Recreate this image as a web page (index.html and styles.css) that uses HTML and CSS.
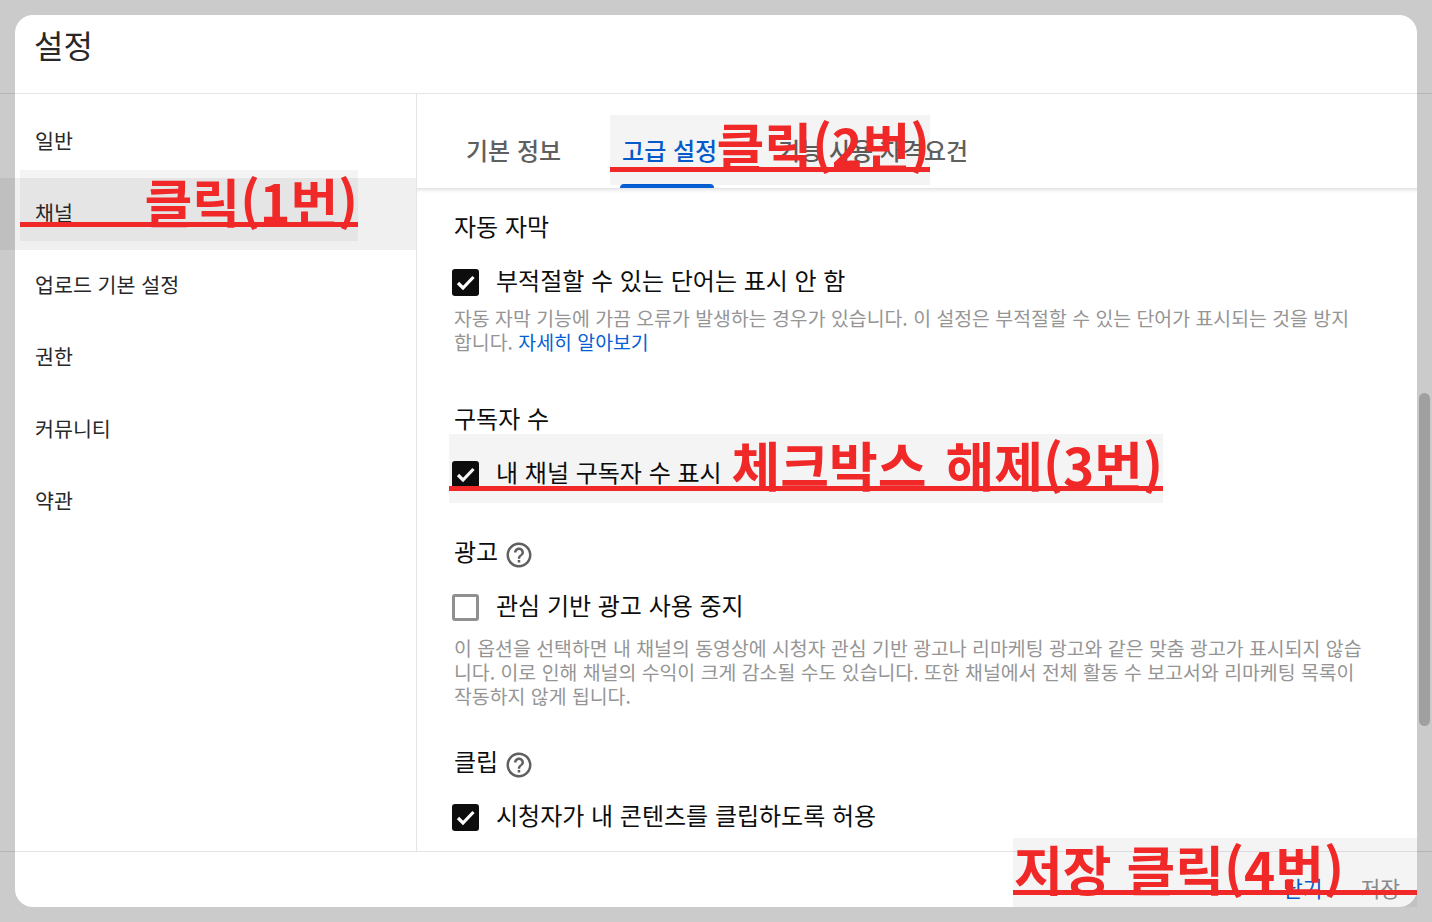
FILE: index.html
```html
<!DOCTYPE html>
<html lang="ko">
<head>
  <meta charset="UTF-8">
  <title>설정</title>
  <link rel="stylesheet" href="styles.css">
</head>
<body>

  <div class="dialog">
    <div class="dialog-header">설정</div>

    <div class="dialog-body">
      <!-- Left menu -->
      <div class="sidebar">
        <div class="side-item">일반</div>
        <div class="side-item side-item-active">채널</div>
        <div class="side-item">업로드 기본 설정</div>
        <div class="side-item">권한</div>
        <div class="side-item">커뮤니티</div>
        <div class="side-item">약관</div>
      </div>

      <div class="main">
        <div class="tabs">
          <div class="tab">기본 정보</div>
          <div class="tab tab-active">고급 설정</div>
          <div class="tab">기능 사용 자격요건</div>
        </div>

        <div class="content">
          <div class="section">
            <div class="section-title">자동 자막</div>
            <div class="check-row">
              <span class="checkbox checked">
                <svg viewBox="0 0 27 27"><path d="M6 14l5 5L21.5 8"/></svg>
              </span>
              부적절할 수 있는 단어는 표시 안 함
            </div>
            <div class="desc desc-tight">자동 자막 기능에 가끔 오류가 발생하는 경우가 있습니다. 이 설정은 부적절할 수 있는 단어가 표시되는 것을 방지합니다. <a href="#">자세히 알아보기</a></div>
          </div>

          <div class="section section-tall">
            <div class="section-title">구독자 수</div>
            <div class="check-row">
              <span class="checkbox checked">
                <svg viewBox="0 0 27 27"><path d="M6 14l5 5L21.5 8"/></svg>
              </span>
              내 채널 구독자 수 표시
            </div>
          </div>

          <div class="section section-short">
            <div class="section-title">
              광고
              <svg class="help" viewBox="0 0 24 24"><path d="M11 18h2v-2h-2v2zm1-16C6.48 2 2 6.48 2 12s4.48 10 10 10 10-4.48 10-10S17.52 2 12 2zm0 18c-4.41 0-8-3.59-8-8s3.59-8 8-8 8 3.59 8 8-3.59 8-8 8zm0-14c-2.21 0-4 1.79-4 4h2c0-1.1.9-2 2-2s2 .9 2 2c0 2-3 1.75-3 5h2c0-2.25 3-2.5 3-5 0-2.21-1.79-4-4-4z"/></svg>
            </div>
            <div class="check-row">
              <span class="checkbox"></span>
              관심 기반 광고 사용 중지
            </div>
            <div class="desc">이 옵션을 선택하면 내 채널의 동영상에 시청자 관심 기반 광고나 리마케팅 광고와 같은 맞춤 광고가 표시되지 않습니다. 이로 인해 채널의 수익이 크게 감소될 수도 있습니다. 또한 채널에서 전체 활동 수 보고서와 리마케팅 목록이 작동하지 않게 됩니다.</div>
          </div>

          <div class="section">
            <div class="section-title">
              클립
              <svg class="help" viewBox="0 0 24 24"><path d="M11 18h2v-2h-2v2zm1-16C6.48 2 2 6.48 2 12s4.48 10 10 10 10-4.48 10-10S17.52 2 12 2zm0 18c-4.41 0-8-3.59-8-8s3.59-8 8-8 8 3.59 8 8-3.59 8-8 8zm0-14c-2.21 0-4 1.79-4 4h2c0-1.1.9-2 2-2s2 .9 2 2c0 2-3 1.75-3 5h2c0-2.25 3-2.5 3-5 0-2.21-1.79-4-4-4z"/></svg>
            </div>
            <div class="check-row">
              <span class="checkbox checked">
                <svg viewBox="0 0 27 27"><path d="M6 14l5 5L21.5 8"/></svg>
              </span>
              시청자가 내 콘텐츠를 클립하도록 허용
            </div>
          </div>
        </div>
      </div>
    </div>

    <div class="dialog-footer">
      <span class="btn-close">닫기</span>
      <span class="btn-save">저장</span>
    </div>
  </div>

  <div class="scrollbar"></div>

  <!-- Red notes drawn over the screenshot -->
  <div class="mark mark-1"><div class="mark-label">클릭(1번)</div></div>
  <div class="mark mark-2"><div class="mark-label">클릭(2번)</div></div>
  <div class="mark mark-3"><div class="mark-label">체크박스 해제(3번)</div></div>
  <div class="mark mark-4"><div class="mark-label">저장 클릭(4번)</div></div>

</body>
</html>
```

FILE: styles.css
```css
html, body { height: 100%; }
body { margin: 0; background: #cbcbcb; font-family: "Noto Sans CJK KR", "Noto Sans", sans-serif; color: #0d0d0d; overflow: hidden; }

.dialog { position: relative; display: flex; flex-direction: column; height: 892px; margin: 15px; background: #fff; border-radius: 18px; }

.dialog-header { position: relative; height: 78px; padding: 6px 19px 0; box-sizing: border-box; font-size: 32px; line-height: 46px; color: #282828; }
.dialog-header::after { content: ""; position: absolute; left: -15px; right: -15px; bottom: -1px; height: 1px; background: rgba(0,0,0,.1); }

.dialog-body { flex: 1; display: flex; min-height: 0; padding-top: 1px; }

.sidebar { width: 401px; padding-top: 12px; border-right: 1px solid #e5e5e5; flex-shrink: 0; }
.side-item { height: 72px; padding-left: 20px; font-size: 20.6px; line-height: 68px; color: #282828; }
.side-item-active { margin-left: -15px; padding-left: 35px; background: rgba(0,0,0,.06); }

.main { flex: 1; min-width: 0; display: flex; flex-direction: column; }

.tabs { position: relative; display: flex; height: 95px; box-sizing: border-box; padding-left: 49px; gap: 61px; flex-shrink: 0; border-bottom: 1px solid #e5e5e5; }
.tabs::after { content: ""; position: absolute; left: 0; right: 0; bottom: -5px; height: 4px; background: linear-gradient(rgba(0,0,0,.08), rgba(0,0,0,0)); }
.tab { position: relative; padding-top: 36px; font-size: 24px; line-height: 40px; font-weight: 500; color: #606060; white-space: nowrap; }
.tab-active { color: #065fd4; }
.tab-active::after { content: ""; position: absolute; left: -2px; right: 3px; bottom: 0; height: 4px; background: #065fd4; border-radius: 4px 4px 0 0; }

.content { flex: 1; min-height: 0; overflow: hidden; padding: 21px 51px 0 37px; }

.section { margin-bottom: 48px; }
.section-tall { margin-bottom: 50px; }
.section-short { margin-bottom: 37px; }
.section-title { display: flex; align-items: center; gap: 6px; height: 32px; font-size: 24px; line-height: 32px; }

.help { width: 30px; height: 30px; margin-top: 7px; fill: #606060; }

.check-row { display: flex; align-items: center; gap: 17px; height: 28px; margin-top: 23px; margin-left: -2px; font-size: 24px; }
.checkbox { display: block; width: 27px; height: 27px; margin-top: 7px; box-sizing: border-box; border: 3px solid #909090; border-radius: 3px; flex-shrink: 0; }
.checkbox.checked { background: #0d0d0d; border: 0; }
.checkbox svg { display: block; width: 27px; height: 27px; fill: none; stroke: #fff; stroke-width: 3.2; }

.desc { margin-top: 18px; font-size: 19.4px; line-height: 24px; color: #959595; }
.desc-tight { margin-top: 13px; }
.desc a { color: #065fd4; text-decoration: none; }

.dialog-footer { position: relative; display: flex; justify-content: flex-end; gap: 38px; height: 56px; padding: 0 17px 0 0; box-sizing: border-box; font-size: 21.5px; line-height: 74px; }
.dialog-footer::before { content: ""; position: absolute; left: -15px; right: -15px; top: 0; height: 1px; background: rgba(0,0,0,.1); }
.btn-close { color: #065fd4; }
.btn-save { color: #909090; }

.scrollbar { position: absolute; left: 1419px; top: 393px; width: 11px; height: 333px; border-radius: 6px; background: #a0a0a0; }

/* notes */
.mark { position: absolute; background: rgba(0,0,0,.045); }
.mark-label { box-sizing: border-box; border-bottom: 5px solid #f02828; text-align: right; font-weight: 700; color: #f02828; white-space: nowrap; line-height: 60px; }
.mark-1 { left: 20px; top: 170px; width: 338px; height: 71px; }
.mark-1 .mark-label { height: 57px; padding-top: 1px; font-size: 52px; }
.mark-2 { left: 610px; top: 115px; width: 320px; height: 70px; }
.mark-2 .mark-label { height: 57px; font-size: 52px; }
.mark-3 { left: 449px; top: 434px; width: 714px; height: 69px; }
.mark-3 .mark-label { height: 57px; font-size: 53px; word-spacing: 4px; }
.mark-4 { left: 1013px; top: 838px; width: 404px; height: 69px; }
.mark-4 .mark-label { height: 57px; padding-right: 73px; font-size: 53px; }
```
